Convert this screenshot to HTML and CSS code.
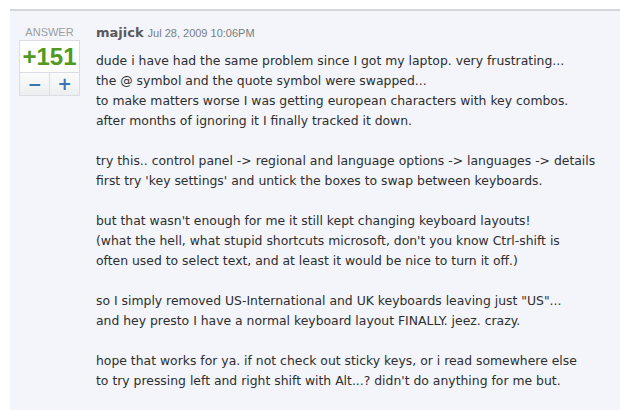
FILE: index.html
```html
<!DOCTYPE html>
<html>
<head>
<meta charset="utf-8">
<link rel="stylesheet" href="styles.css">
</head>
<body>
<div class="post">
  <div class="vote">
    <div class="label">ANSWER</div>
    <div class="box">
      <div class="score">+151</div>
      <div class="btns">
        <span class="btn">&minus;</span>
        <span class="btn">+</span>
      </div>
    </div>
  </div>
  <div class="content">
    <div class="meta"><span class="user">majick</span> <span class="date">Jul 28, 2009 10:06PM</span></div>
    <p>dude i have had the same problem since I got my laptop. very frustrating...<br>
    the @ symbol and the quote symbol were swapped...<br>
    to make matters worse I was getting european characters with key combos.<br>
    after months of ignoring it I finally tracked it down.</p>
    <p>try this.. control panel -&gt; regional and language options -&gt; languages -&gt; details<br>
    first try 'key settings' and untick the boxes to swap between keyboards.</p>
    <p>but that wasn't enough for me it still kept changing keyboard layouts!<br>
    (what the hell, what stupid shortcuts microsoft, don't you know Ctrl-shift is<br>
    often used to select text, and at least it would be nice to turn it off.)</p>
    <p>so I simply removed US-International and UK keyboards leaving just "US"...<br>
    and hey presto I have a normal keyboard layout FINALLY. jeez. crazy.</p>
    <p>hope that works for ya. if not check out sticky keys, or i read somewhere else<br>
    to try pressing left and right shift with Alt...? didn't do anything for me but.</p>
  </div>
</div>
</body>
</html>
```
FILE: styles.css
```css
html, body {
  margin: 0;
  padding: 0;
  background: #ffffff;
}
.post {
  box-sizing: border-box;
  margin: 9px 0 0 10px;
  border-top: 2px solid #d3d6dc;
  background: #f3f5fa;
  display: flex;
  align-items: flex-start;
  padding: 14px 0 0 9px;
  height: 401px;
  overflow: hidden;
}
.vote {
  width: 61px;
  display: flex;
  flex-direction: column;
  align-items: stretch;
}
.label {
  font-family: "Liberation Sans", Arial, sans-serif;
  font-size: 11px;
  color: #9a9da3;
  text-align: center;
  line-height: 14px;
  height: 15px;
}
.box {
  border: 1px solid #dadde3;
  background: #ffffff;
}
.score {
  font-family: "Liberation Sans", Arial, sans-serif;
  font-weight: bold;
  font-size: 24px;
  color: #4f9a1f;
  text-align: center;
  height: 31px;
  line-height: 32px;
  border-bottom: 1px solid #dadde3;
}
.btns {
  display: flex;
  height: 22px;
  background: linear-gradient(#fbfbfb, #eceef0);
}
.btn {
  flex: 1;
  text-align: center;
  font-family: "DejaVu Sans", Verdana, sans-serif;
  font-weight: bold;
  font-size: 17px;
  line-height: 22px;
  color: #3a74ad;
}
.btn + .btn {
  border-left: 1px solid #dadde3;
}
.content {
  margin-left: 16px;
  font-family: "DejaVu Sans", Verdana, sans-serif;
  font-size: 12.4px;
  color: #2e2e2e;
  line-height: 20px;
}
.meta {
  line-height: 16px;
  margin-bottom: 10px;
}
.user {
  font-weight: bold;
  color: #5a5a5a;
  font-size: 13px;
}
.date {
  font-family: "Liberation Sans", Arial, sans-serif;
  font-size: 11px;
  color: #7a7d82;
}
p {
  margin: 0 0 20px 0;
}
```
